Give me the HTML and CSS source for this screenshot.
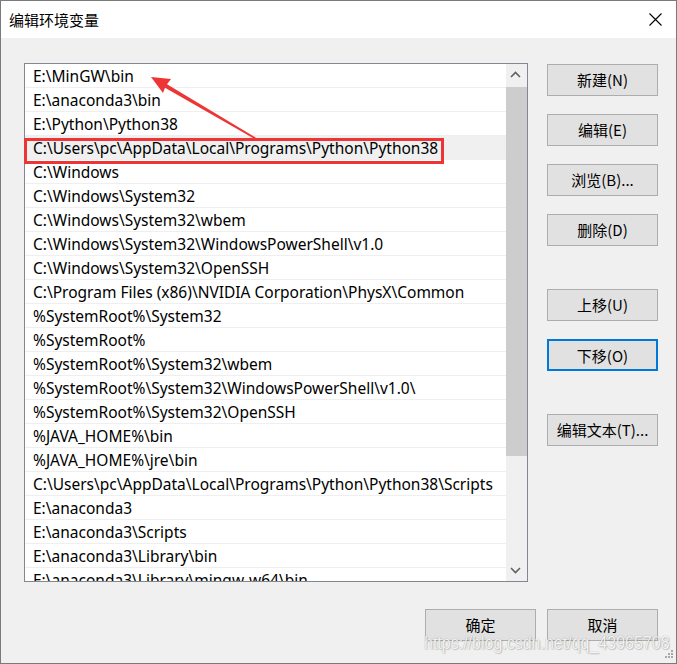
FILE: index.html
```html
<!DOCTYPE html>
<html lang="zh-CN">
<head>
<meta charset="utf-8">
<title>编辑环境变量</title>
<link rel="stylesheet" href="styles.css">
</head>
<body>
<div class="window">
  <div class="titlebar">
    <span class="title">编辑环境变量</span>
    <svg class="close" width="13" height="13" viewBox="0 0 13 13"><path d="M0.5 0.5 L12.5 12.5 M12.5 0.5 L0.5 12.5" stroke="#000" stroke-width="1.1" fill="none"/></svg>
  </div>
  <div class="content">
    <div class="main">
      <div class="listbox">
        <div class="rows">
          <div class="row">E:\MinGW\bin</div>
          <div class="row">E:\anaconda3\bin</div>
          <div class="row">E:\Python\Python38</div>
          <div class="row selected">C:\Users\pc\AppData\Local\Programs\Python\Python38</div>
          <div class="row">C:\Windows</div>
          <div class="row">C:\Windows\System32</div>
          <div class="row">C:\Windows\System32\wbem</div>
          <div class="row">C:\Windows\System32\WindowsPowerShell\v1.0</div>
          <div class="row">C:\Windows\System32\OpenSSH</div>
          <div class="row">C:\Program Files (x86)\NVIDIA Corporation\PhysX\Common</div>
          <div class="row">%SystemRoot%\System32</div>
          <div class="row">%SystemRoot%</div>
          <div class="row">%SystemRoot%\System32\wbem</div>
          <div class="row">%SystemRoot%\System32\WindowsPowerShell\v1.0\</div>
          <div class="row">%SystemRoot%\System32\OpenSSH</div>
          <div class="row">%JAVA_HOME%\bin</div>
          <div class="row">%JAVA_HOME%\jre\bin</div>
          <div class="row">C:\Users\pc\AppData\Local\Programs\Python\Python38\Scripts</div>
          <div class="row">E:\anaconda3</div>
          <div class="row">E:\anaconda3\Scripts</div>
          <div class="row">E:\anaconda3\Library\bin</div>
          <div class="row">E:\anaconda3\Library\mingw-w64\bin</div>
        </div>
        <div class="scrollbar">
          <div class="sb-btn sb-up"><svg width="21" height="23" viewBox="0 0 21 23"><polyline points="5,13 9.5,8.5 14,13" fill="none" stroke="#606060" stroke-width="1.6"/></svg></div>
          <div class="sb-track"><div class="sb-thumb"></div></div>
          <div class="sb-btn sb-down"><svg width="21" height="23" viewBox="0 0 21 23"><polyline points="5,10 9.5,14.5 14,10" fill="none" stroke="#606060" stroke-width="1.6"/></svg></div>
        </div>
      </div>
      <div class="side">
        <button class="btn">新建(N)</button>
        <button class="btn">编辑(E)</button>
        <button class="btn">浏览(B)...</button>
        <button class="btn">删除(D)</button>
        <button class="btn group">上移(U)</button>
        <button class="btn focused">下移(O)</button>
        <button class="btn group">编辑文本(T)...</button>
      </div>
    </div>
    <div class="footer">
      <button class="btn">确定</button>
      <button class="btn">取消</button>
    </div>
  </div>

  <div class="highlight"></div>
  <svg class="arrow" width="677" height="664" viewBox="0 0 677 664">
    <polygon points="151,77 171,79 167,84.3 258.4,139.3 257.6,140.7 165,87.7 163,93" fill="#ee3535"/>
  </svg>
  <div class="watermark">https://blog.csdn.net/qq_43965708</div>
  <svg class="grip" width="11" height="11" viewBox="0 0 11 11" fill="#a8a8a8">
    <rect x="8" y="0" width="2" height="2"/>
    <rect x="5" y="3" width="2" height="2"/><rect x="8" y="3" width="2" height="2"/>
    <rect x="2" y="6" width="2" height="2"/><rect x="5" y="6" width="2" height="2"/><rect x="8" y="6" width="2" height="2"/>
  </svg>
</div>
</body>
</html>
```
FILE: styles.css
```css
* { box-sizing: border-box; }
html, body { margin: 0; padding: 0; background: #f0f0f0; }
body {
  font-family: "Noto Sans", "Noto Sans CJK SC", sans-serif;
  font-size: 15px;
  color: #000;
}
.window {
  position: relative;
  width: 677px;
  height: 664px;
  border: 1px solid #7a7a7a;
  background: #f0f0f0;
  overflow: hidden;
}
.titlebar {
  height: 37px;
  background: #fff;
  display: flex;
  align-items: center;
  justify-content: space-between;
  padding: 0 14px 0 8px;
}
.title {
  font-family: "Noto Sans CJK SC", sans-serif;
  font-size: 15px;
  line-height: 20px;
}
.close { display: block; }
.content {
  padding: 25px 18px 0 23px;
}
.main {
  display: flex;
  align-items: flex-start;
  gap: 19px;
}
.listbox {
  width: 504px;
  height: 519px;
  border: 1px solid #828790;
  background: #fff;
  display: flex;
  overflow: hidden;
}
.rows {
  flex: 1;
  overflow: hidden;
}
.row {
  height: 24px;
  border-bottom: 1px solid #efefef;
  padding: 1px 0 0 8px;
  font-size: 15.5px;
  line-height: 22px;
  white-space: nowrap;
  overflow: hidden;
}
.row.selected { background: #f0f0f0; }
.scrollbar {
  width: 21px;
  background: #f0f0f0;
  display: flex;
  flex-direction: column;
}
.sb-btn { height: 23px; flex: none; }
.sb-btn svg { display: block; }
.sb-track { flex: 1; }
.sb-thumb { height: 369px; background: #cdcdcd; }
.side {
  width: 111px;
  padding-top: 1px;
  display: flex;
  flex-direction: column;
  gap: 18px;
}
.btn {
  width: 111px;
  height: 32px;
  border: 1px solid #adadad;
  background: #e1e1e1;
  font-family: "Noto Sans CJK SC", sans-serif;
  font-size: 15px;
  color: #000;
  padding: 0;
  margin: 0;
  line-height: 30px;
}
.btn.group { margin-top: 25px; }
.btn.focused { border: 2px solid #0078d7; }
.footer {
  margin-top: 27px;
  display: flex;
  justify-content: flex-end;
  gap: 11px;
}
.highlight {
  position: absolute;
  left: 23px;
  top: 137px;
  width: 420px;
  height: 26px;
  border: 3px solid #ee3535;
}
.arrow {
  position: absolute;
  left: -1px;
  top: -1px;
  pointer-events: none;
}
.watermark {
  position: absolute;
  left: 423px;
  top: 630px;
  font-family: "Liberation Sans", sans-serif;
  font-size: 16px;
  line-height: 20px;
  color: rgba(255,255,255,0.9);
  text-shadow: 0 0 1px rgba(0,0,0,0.35), 1px 1px 1px rgba(0,0,0,0.15);
  transform: scaleY(1.2);
  transform-origin: left top;
  white-space: nowrap;
}
.grip {
  position: absolute;
  right: 2px;
  bottom: 2px;
}
```
